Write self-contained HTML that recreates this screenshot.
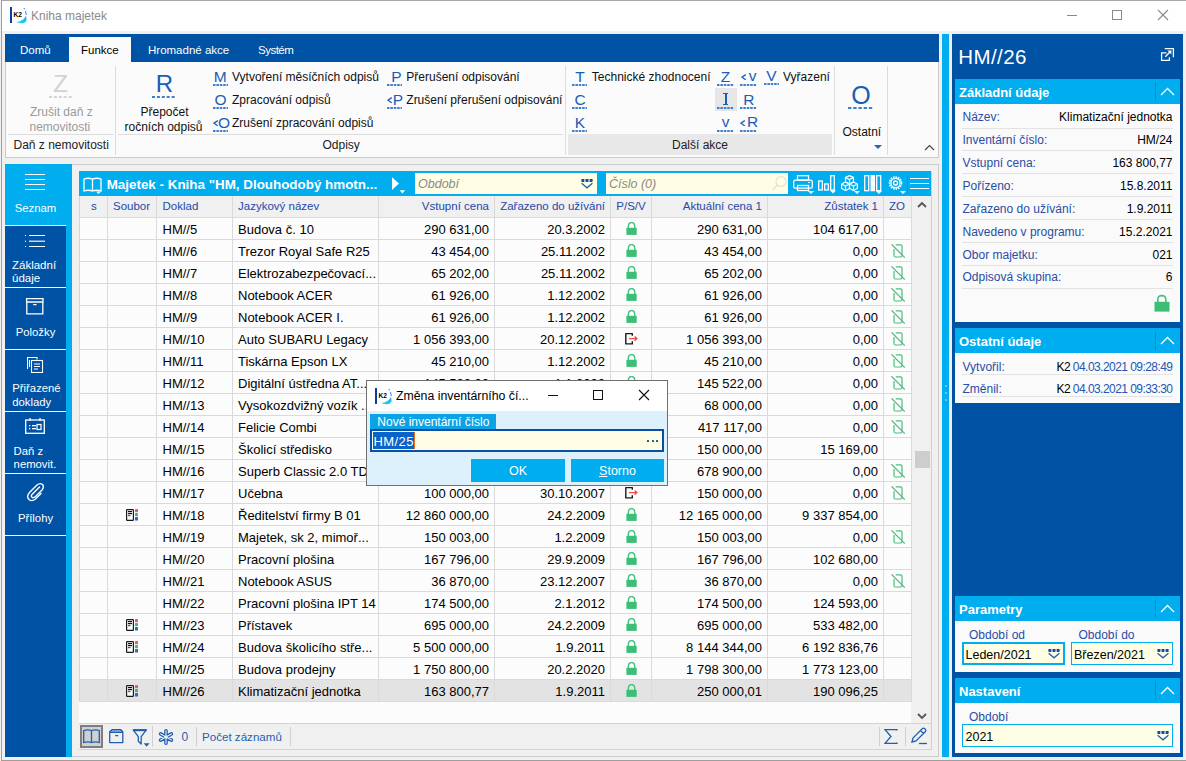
<!DOCTYPE html><html><head><meta charset="utf-8"><style>
html,body{margin:0;padding:0;width:1186px;height:761px;overflow:hidden;background:#F0F0F0;font-family:"Liberation Sans", sans-serif;}
body{position:relative;}
</style></head><body>
<div style="position:absolute;left:1px;top:0px;width:1185px;height:761px;box-sizing:border-box;border:1px solid #9E9E9E;border-top-color:#A8A8A8;border-right:none"></div>
<div style="position:absolute;left:2px;top:1px;width:1184px;height:30px;background:#FFFFFF"></div>
<svg style="position:absolute;left:10px;top:7px;" width="17" height="17" viewBox="0 0 17 17"><defs><linearGradient id="kg" x1="0" y1="1" x2="1" y2="0"><stop offset="0" stop-color="#2ED8C8"/><stop offset="0.6" stop-color="#12C8F5"/><stop offset="1" stop-color="#1E6CF0"/></linearGradient></defs><rect x="0" y="0" width="2" height="16" fill="#0A3E9A"/><text x="3.4" y="9.9" font-size="6.6" font-weight="700" fill="#000" font-family="Liberation Sans">K2</text><path d="M6 14.5 Q9 15.5 11 13.5 Q15 12 16 8.5 L16.5 13 Q16 16 12 16.2 Q8 16.5 6 14.5 Z" fill="url(#kg)"/><path d="M15.5 4 L16.3 8" stroke="#3A7BF0" stroke-width="1"/><circle cx="14.3" cy="1.8" r="0.8" fill="#4A8AF5"/></svg>
<div style="position:absolute;left:31px;top:9.84px;font-size:12px;line-height:1;color:#8A8A8A;font-weight:400;white-space:nowrap;">Kniha majetek</div>
<div style="position:absolute;left:1067px;top:15px;width:10px;height:1px;background:#8A8A8A"></div>
<div style="position:absolute;left:1112px;top:10px;width:10px;height:10px;box-sizing:border-box;border:1px solid #8A8A8A"></div>
<svg style="position:absolute;left:1157px;top:9px;" width="12" height="12" viewBox="0 0 12 12"><path d="M1 1 L11 11 M11 1 L1 11" stroke="#8A8A8A" stroke-width="1.1"/></svg>
<div style="position:absolute;left:5px;top:34px;width:934px;height:28px;background:#0052A5"></div>
<div style="position:absolute;left:69px;top:37px;width:62px;height:25px;background:#FBFBFB"></div>
<div style="position:absolute;left:20px;top:45.27px;font-size:11.5px;line-height:1;color:#FFFFFF;font-weight:400;white-space:nowrap;">Domů</div>
<div style="position:absolute;left:81px;top:45.27px;font-size:11.5px;line-height:1;color:#000000;font-weight:400;white-space:nowrap;">Funkce</div>
<div style="position:absolute;left:148px;top:45.27px;font-size:11.5px;line-height:1;color:#FFFFFF;font-weight:400;white-space:nowrap;">Hromadné akce</div>
<div style="position:absolute;left:258px;top:45.27px;font-size:11.5px;line-height:1;color:#FFFFFF;font-weight:400;white-space:nowrap;letter-spacing:-0.5px">Systém</div>
<div style="position:absolute;left:5px;top:62px;width:934px;height:96px;background:#FBFBFB;box-sizing:border-box;border:1px solid #CBCBCB;border-top:none"></div>
<div style="position:absolute;left:60.5px;transform:translateX(-50%);top:72.28px;font-size:24px;line-height:1;color:#D2D2D2;font-weight:400;white-space:nowrap;">Z</div>
<svg style="position:absolute;left:49px;top:95.5px;" width="24" height="2" viewBox="0 0 24 2"><line x1="0" y1="1.0" x2="24" y2="1.0" stroke="#D5D5D5" stroke-width="2" stroke-dasharray="3 1.9"/></svg>
<div style="position:absolute;left:30px;top:106.44px;font-size:12px;line-height:1;color:#9A9A9A;font-weight:400;white-space:nowrap;">Zrušit daň z</div>
<div style="position:absolute;left:29.5px;top:121.34px;font-size:12px;line-height:1;color:#9A9A9A;font-weight:400;white-space:nowrap;">nemovitosti</div>
<div style="position:absolute;left:8px;top:134px;width:105px;height:1px;background:#DCDCDC"></div>
<div style="position:absolute;left:13.5px;top:139.04px;font-size:12px;line-height:1;color:#222;font-weight:400;white-space:nowrap;">Daň z nemovitosti</div>
<div style="position:absolute;left:115px;top:66px;width:1px;height:89px;background:#DCDCDC"></div>
<div style="position:absolute;left:164.4px;transform:translateX(-50%);top:72.28px;font-size:24px;line-height:1;color:#1A5DB4;font-weight:400;white-space:nowrap;">R</div>
<svg style="position:absolute;left:152px;top:95.5px;" width="24" height="2" viewBox="0 0 24 2"><line x1="0" y1="1.0" x2="24" y2="1.0" stroke="#3F7FCC" stroke-width="2" stroke-dasharray="3 1.9"/></svg>
<div style="position:absolute;left:140.5px;top:106.44px;font-size:12px;line-height:1;color:#111;font-weight:400;white-space:nowrap;">Přepočet</div>
<div style="position:absolute;left:124.5px;top:121.34px;font-size:12px;line-height:1;color:#111;font-weight:400;white-space:nowrap;">ročních odpisů</div>
<div style="position:absolute;left:118px;top:134px;width:445px;height:1px;background:#DCDCDC"></div>
<div style="position:absolute;left:322.5px;top:138.64px;font-size:12px;line-height:1;color:#222;font-weight:400;white-space:nowrap;">Odpisy</div>
<div style="position:absolute;left:220.3px;transform:translateX(-50%);top:68.58px;font-size:15.5px;line-height:1;color:#1A5DB4;font-weight:400;white-space:nowrap;">M</div>
<svg style="position:absolute;left:213px;top:83.5px;" width="15" height="2" viewBox="0 0 15 2"><line x1="0" y1="1.0" x2="15" y2="1.0" stroke="#3F7FCC" stroke-width="2" stroke-dasharray="2.5 0.9"/></svg>
<div style="position:absolute;left:232px;top:71.34px;font-size:12px;line-height:1;color:#111;font-weight:400;white-space:nowrap;">Vytvoření měsíčních odpisů</div>
<div style="position:absolute;left:220.6px;transform:translateX(-50%);top:91.58px;font-size:15.5px;line-height:1;color:#1A5DB4;font-weight:400;white-space:nowrap;">O</div>
<svg style="position:absolute;left:213px;top:106.5px;" width="15" height="2" viewBox="0 0 15 2"><line x1="0" y1="1.0" x2="15" y2="1.0" stroke="#3F7FCC" stroke-width="2" stroke-dasharray="2.5 0.9"/></svg>
<div style="position:absolute;left:232px;top:94.34px;font-size:12px;line-height:1;color:#111;font-weight:400;white-space:nowrap;">Zpracování odpisů</div>
<div style="position:absolute;left:224px;transform:translateX(-50%);top:114.58px;font-size:15.5px;line-height:1;color:#1A5DB4;font-weight:400;white-space:nowrap;">O</div>
<svg style="position:absolute;left:212.8px;top:120.2px;" width="5.8" height="6.4" viewBox="0 0 5.8 6.4"><path d="M4.8 0.6 L0.9 3.2 L4.8 5.800000000000001" stroke="#1A5DB4" stroke-width="1.3" fill="none"/></svg>
<svg style="position:absolute;left:213px;top:129.5px;" width="15" height="2" viewBox="0 0 15 2"><line x1="0" y1="1.0" x2="15" y2="1.0" stroke="#3F7FCC" stroke-width="2" stroke-dasharray="2.5 0.9"/></svg>
<div style="position:absolute;left:232px;top:117.34px;font-size:12px;line-height:1;color:#111;font-weight:400;white-space:nowrap;">Zrušení zpracování odpisů</div>
<div style="position:absolute;left:396.3px;transform:translateX(-50%);top:68.58px;font-size:15.5px;line-height:1;color:#1A5DB4;font-weight:400;white-space:nowrap;">P</div>
<svg style="position:absolute;left:387px;top:83.5px;" width="15" height="2" viewBox="0 0 15 2"><line x1="0" y1="1.0" x2="15" y2="1.0" stroke="#3F7FCC" stroke-width="2" stroke-dasharray="2.5 0.9"/></svg>
<div style="position:absolute;left:406.3px;top:71.34px;font-size:12px;line-height:1;color:#111;font-weight:400;white-space:nowrap;">Přerušení odpisování</div>
<div style="position:absolute;left:398px;transform:translateX(-50%);top:91.58px;font-size:15.5px;line-height:1;color:#1A5DB4;font-weight:400;white-space:nowrap;">P</div>
<svg style="position:absolute;left:387.2px;top:97.2px;" width="5.8" height="6.4" viewBox="0 0 5.8 6.4"><path d="M4.8 0.6 L0.9 3.2 L4.8 5.800000000000001" stroke="#1A5DB4" stroke-width="1.3" fill="none"/></svg>
<svg style="position:absolute;left:387px;top:106.5px;" width="15" height="2" viewBox="0 0 15 2"><line x1="0" y1="1.0" x2="15" y2="1.0" stroke="#3F7FCC" stroke-width="2" stroke-dasharray="2.5 0.9"/></svg>
<div style="position:absolute;left:406.3px;top:94.34px;font-size:12px;line-height:1;color:#111;font-weight:400;white-space:nowrap;">Zrušení přerušení odpisování</div>
<div style="position:absolute;left:565px;top:66px;width:1px;height:89px;background:#DCDCDC"></div>
<div style="position:absolute;left:568px;top:134px;width:264px;height:21px;background:#E8E8E8"></div>
<div style="position:absolute;left:700px;transform:translateX(-50%);top:138.64px;font-size:12px;line-height:1;color:#222;font-weight:400;white-space:nowrap;">Další akce</div>
<div style="position:absolute;left:580px;transform:translateX(-50%);top:68.58px;font-size:15.5px;line-height:1;color:#1A5DB4;font-weight:400;white-space:nowrap;">T</div>
<svg style="position:absolute;left:572px;top:83.5px;" width="15" height="2" viewBox="0 0 15 2"><line x1="0" y1="1.0" x2="15" y2="1.0" stroke="#3F7FCC" stroke-width="2" stroke-dasharray="2.5 0.9"/></svg>
<div style="position:absolute;left:591.8px;top:71.34px;font-size:12px;line-height:1;color:#111;font-weight:400;white-space:nowrap;">Technické zhodnocení</div>
<div style="position:absolute;left:580px;transform:translateX(-50%);top:91.58px;font-size:15.5px;line-height:1;color:#1A5DB4;font-weight:400;white-space:nowrap;">C</div>
<svg style="position:absolute;left:572px;top:106.5px;" width="15" height="2" viewBox="0 0 15 2"><line x1="0" y1="1.0" x2="15" y2="1.0" stroke="#3F7FCC" stroke-width="2" stroke-dasharray="2.5 0.9"/></svg>
<div style="position:absolute;left:580px;transform:translateX(-50%);top:114.58px;font-size:15.5px;line-height:1;color:#1A5DB4;font-weight:400;white-space:nowrap;">K</div>
<svg style="position:absolute;left:572px;top:129.5px;" width="15" height="2" viewBox="0 0 15 2"><line x1="0" y1="1.0" x2="15" y2="1.0" stroke="#3F7FCC" stroke-width="2" stroke-dasharray="2.5 0.9"/></svg>
<div style="position:absolute;left:715px;top:88px;width:22px;height:23px;background:#E6E6E6"></div>
<div style="position:absolute;left:725.5px;transform:translateX(-50%);top:68.78px;font-size:15.5px;line-height:1;color:#1A5DB4;font-weight:400;white-space:nowrap;">Z</div>
<svg style="position:absolute;left:717px;top:84px;" width="17" height="2" viewBox="0 0 17 2"><line x1="0" y1="1.0" x2="17" y2="1.0" stroke="#3F7FCC" stroke-width="2" stroke-dasharray="2.5 0.9"/></svg>
<div style="position:absolute;left:725px;top:93.2px;width:1.6px;height:11.6px;background:#1A5DB4"></div>
<div style="position:absolute;left:723px;top:93.2px;width:5.4px;height:1.3px;background:#1A5DB4"></div>
<div style="position:absolute;left:723px;top:103.5px;width:5.4px;height:1.3px;background:#1A5DB4"></div>
<svg style="position:absolute;left:717px;top:107px;" width="17" height="2" viewBox="0 0 17 2"><line x1="0" y1="1.0" x2="17" y2="1.0" stroke="#3F7FCC" stroke-width="2" stroke-dasharray="2.5 0.9"/></svg>
<div style="position:absolute;left:725.5px;transform:translateX(-50%);top:113.88px;font-size:15.5px;line-height:1;color:#1A5DB4;font-weight:400;white-space:nowrap;">v</div>
<svg style="position:absolute;left:717px;top:130px;" width="17" height="2" viewBox="0 0 17 2"><line x1="0" y1="1.0" x2="17" y2="1.0" stroke="#3F7FCC" stroke-width="2" stroke-dasharray="2.5 0.9"/></svg>
<div style="position:absolute;left:752.6px;transform:translateX(-50%);top:68.18px;font-size:15.5px;line-height:1;color:#1A5DB4;font-weight:400;white-space:nowrap;">v</div>
<svg style="position:absolute;left:741px;top:73.8px;" width="5.8" height="6.4" viewBox="0 0 5.8 6.4"><path d="M4.8 0.6 L0.9 3.2 L4.8 5.800000000000001" stroke="#1A5DB4" stroke-width="1.3" fill="none"/></svg>
<svg style="position:absolute;left:740px;top:84px;" width="17" height="2" viewBox="0 0 17 2"><line x1="0" y1="1.0" x2="17" y2="1.0" stroke="#3F7FCC" stroke-width="2" stroke-dasharray="2.5 0.9"/></svg>
<div style="position:absolute;left:748.8px;transform:translateX(-50%);top:91.68px;font-size:15.5px;line-height:1;color:#1A5DB4;font-weight:400;white-space:nowrap;">R</div>
<svg style="position:absolute;left:740px;top:107px;" width="17" height="2" viewBox="0 0 17 2"><line x1="0" y1="1.0" x2="17" y2="1.0" stroke="#3F7FCC" stroke-width="2" stroke-dasharray="2.5 0.9"/></svg>
<div style="position:absolute;left:752.6px;transform:translateX(-50%);top:114.28px;font-size:15.5px;line-height:1;color:#1A5DB4;font-weight:400;white-space:nowrap;">R</div>
<svg style="position:absolute;left:740.2px;top:119.9px;" width="5.8" height="6.4" viewBox="0 0 5.8 6.4"><path d="M4.8 0.6 L0.9 3.2 L4.8 5.800000000000001" stroke="#1A5DB4" stroke-width="1.3" fill="none"/></svg>
<svg style="position:absolute;left:740px;top:130px;" width="17" height="2" viewBox="0 0 17 2"><line x1="0" y1="1.0" x2="17" y2="1.0" stroke="#3F7FCC" stroke-width="2" stroke-dasharray="2.5 0.9"/></svg>
<div style="position:absolute;left:771.5px;transform:translateX(-50%);top:68.18px;font-size:15.5px;line-height:1;color:#1A5DB4;font-weight:400;white-space:nowrap;">V</div>
<svg style="position:absolute;left:764px;top:83.2px;" width="15" height="2" viewBox="0 0 15 2"><line x1="0" y1="1.0" x2="15" y2="1.0" stroke="#3F7FCC" stroke-width="2" stroke-dasharray="2.5 0.9"/></svg>
<div style="position:absolute;left:783px;top:71.34px;font-size:12px;line-height:1;color:#111;font-weight:400;white-space:nowrap;">Vyřazení</div>
<div style="position:absolute;left:834px;top:66px;width:1px;height:89px;background:#DCDCDC"></div>
<div style="position:absolute;left:861px;transform:translateX(-50%);top:83.14px;font-size:25px;line-height:1;color:#1A5DB4;font-weight:400;white-space:nowrap;">O</div>
<svg style="position:absolute;left:848px;top:107.3px;" width="26" height="2" viewBox="0 0 26 2"><line x1="0" y1="1.0" x2="26" y2="1.0" stroke="#3F7FCC" stroke-width="2" stroke-dasharray="3.4 1.8"/></svg>
<div style="position:absolute;left:842.5px;top:126.14px;font-size:12px;line-height:1;color:#111;font-weight:400;white-space:nowrap;">Ostatní</div>
<svg style="position:absolute;left:874px;top:145px;" width="8" height="4" viewBox="0 0 8 4"><path d="M0 0 L8 0 L4 4 Z" fill="#1F66B8"/></svg>
<div style="position:absolute;left:887px;top:66px;width:1px;height:89px;background:#DCDCDC"></div>
<svg style="position:absolute;left:923.5px;top:144px;" width="11" height="7" viewBox="0 0 11 7"><path d="M1 6 L5.5 1.5 L10 6" stroke="#444" stroke-width="1.2" fill="none"/></svg>
<div style="position:absolute;left:72px;top:164px;width:867px;height:593px;box-sizing:border-box;border:1px solid #CBCBCB;border-left:none"></div>
<div style="position:absolute;left:5px;top:164px;width:67px;height:593px;background:#00ADEF"></div>
<div style="position:absolute;left:5px;top:226px;width:61px;height:531px;background:#0052A5"></div>
<div style="position:absolute;left:5px;top:225px;width:61px;height:1px;background:#FFFFFF"></div>
<div style="position:absolute;left:5px;top:287px;width:61px;height:1px;background:#FFFFFF"></div>
<div style="position:absolute;left:5px;top:349px;width:61px;height:1px;background:#FFFFFF"></div>
<div style="position:absolute;left:5px;top:411px;width:61px;height:1px;background:#FFFFFF"></div>
<div style="position:absolute;left:5px;top:473px;width:61px;height:1px;background:#FFFFFF"></div>
<div style="position:absolute;left:5px;top:535px;width:61px;height:1px;background:#FFFFFF"></div>
<div style="position:absolute;left:25px;top:174px;width:20px;height:1px;background:#FFFFFF"></div>
<div style="position:absolute;left:25px;top:179px;width:20px;height:1px;background:#FFFFFF"></div>
<div style="position:absolute;left:25px;top:184px;width:20px;height:1px;background:#FFFFFF"></div>
<div style="position:absolute;left:25px;top:189px;width:20px;height:1px;background:#FFFFFF"></div>
<div style="position:absolute;left:35.5px;transform:translateX(-50%);top:203.43px;font-size:11.3px;line-height:1;color:#FFFFFF;font-weight:400;white-space:nowrap;">Seznam</div>
<svg style="position:absolute;left:25px;top:234px;" width="20" height="14" viewBox="0 0 20 14"><g fill="#FFFFFF"><rect x="0" y="1" width="1" height="1"/><rect x="0" y="6.6" width="1" height="1.2"/><rect x="0" y="12" width="1" height="1"/><rect x="4" y="1" width="16" height="1"/><rect x="4" y="6.5" width="16" height="1.5" fill="#C8D6EA"/><rect x="4" y="12" width="16" height="1"/></g></svg>
<div style="position:absolute;left:12px;top:260.27px;font-size:11.5px;line-height:1;color:#FFFFFF;font-weight:400;white-space:nowrap;">Základní</div>
<div style="position:absolute;left:12px;top:273.27px;font-size:11.5px;line-height:1;color:#FFFFFF;font-weight:400;white-space:nowrap;">údaje</div>
<svg style="position:absolute;left:25px;top:298px;" width="20" height="17" viewBox="0 0 20 17"><g fill="none" stroke="#FFFFFF" stroke-width="1.3"><path d="M1.6 0.7 H18 V4 H1.6 Z M1.8 4 V15.8 H17.8 V4"/><path d="M8.2 6.6 H11.6"/></g></svg>
<div style="position:absolute;left:35.5px;transform:translateX(-50%);top:327.43px;font-size:11.3px;line-height:1;color:#FFFFFF;font-weight:400;white-space:nowrap;">Položky</div>
<svg style="position:absolute;left:27px;top:357px;" width="17" height="16" viewBox="0 0 17 16"><g fill="none" stroke="#FFFFFF" stroke-width="1.1"><path d="M0.5 12 V0.5 H10 V2.5"/><rect x="4.5" y="3.5" width="11" height="12"/><path d="M7 7 H13 M7 9.5 H13 M7 12 H11"/><path d="M2.5 3 V10"/></g></svg>
<div style="position:absolute;left:12.3px;top:383.43px;font-size:11.3px;line-height:1;color:#FFFFFF;font-weight:400;white-space:nowrap;">Přiřazené</div>
<div style="position:absolute;left:12.3px;top:396.73px;font-size:11.3px;line-height:1;color:#FFFFFF;font-weight:400;white-space:nowrap;">doklady</div>
<svg style="position:absolute;left:25px;top:418px;" width="20" height="16" viewBox="0 0 20 16"><g fill="none" stroke="#FFFFFF" stroke-width="1.3"><rect x="0.7" y="2" width="18.6" height="13.3"/><path d="M5 0 V3 M15 0 V3"/></g><g fill="#FFFFFF"><rect x="4" y="7" width="1.3" height="1.3"/><rect x="4" y="10" width="1.3" height="1.3"/><rect x="7" y="7" width="4" height="1.3"/><rect x="7" y="10" width="4" height="1.3"/><rect x="12" y="6.5" width="4" height="5" fill="none" stroke="#FFFFFF" stroke-width="1.2"/></g></svg>
<div style="position:absolute;left:13.6px;top:446.43px;font-size:11.3px;line-height:1;color:#FFFFFF;font-weight:400;white-space:nowrap;">Daň z</div>
<div style="position:absolute;left:13.6px;top:459.03px;font-size:11.3px;line-height:1;color:#FFFFFF;font-weight:400;white-space:nowrap;">nemovit.</div>
<svg style="position:absolute;left:26px;top:482px;" width="19" height="20" viewBox="0 0 19 20"><path d="M13.5 5 L6 12.5 Q4.5 14.5 6.5 15.5 Q8 16 9.5 14.5 L16 8 Q18.5 5 16.5 2.5 Q14 0.5 11 3 L3.5 10.5 Q0 14.5 3 17.5 Q6 20 9.5 17 L15 11.5" fill="none" stroke="#FFFFFF" stroke-width="1.4" stroke-linecap="round"/></svg>
<div style="position:absolute;left:35.5px;transform:translateX(-50%);top:513.43px;font-size:11.3px;line-height:1;color:#FFFFFF;font-weight:400;white-space:nowrap;">Přílohy</div>
<div style="position:absolute;left:942px;top:34px;width:7px;height:723px;background:#00ADEF"></div>
<div style="position:absolute;left:944.5px;top:385px;width:2px;height:2px;background:#7FD3F5;border-radius:1px"></div>
<div style="position:absolute;left:944.5px;top:392px;width:2px;height:2px;background:#7FD3F5;border-radius:1px"></div>
<div style="position:absolute;left:944.5px;top:399px;width:2px;height:2px;background:#7FD3F5;border-radius:1px"></div>
<div style="position:absolute;left:952px;top:34px;width:231px;height:723px;background:#0052A5"></div>
<div style="position:absolute;left:79px;top:171px;width:853px;height:25px;background:#00ADEF"></div>
<svg style="position:absolute;left:83px;top:177px;" width="20" height="17" viewBox="0 0 20 17"><g fill="none" stroke="#FFFFFF" stroke-width="1.3"><path d="M1 2 Q5 0.5 9.5 2 V14 Q5 12.5 1 14 Z"/><path d="M9.5 2 Q14 0.5 18 2 V14 Q14 12.5 9.5 14"/></g><path d="M13 14.5 L18 14.5 L15.5 17 Z" fill="#FFFFFF"/></svg>
<div style="position:absolute;left:106.7px;top:178.16px;font-size:13.4px;line-height:1;color:#FFFFFF;font-weight:700;white-space:nowrap;">Majetek - Kniha &quot;HM, Dlouhodobý hmotn...</div>
<svg style="position:absolute;left:391px;top:176px;" width="15" height="18" viewBox="0 0 15 18"><path d="M1 1.2 L8 7.6 L1 14 Z" fill="#FFFFFF"/><path d="M8.7 14.2 L14.2 14.2 L11.45 17.5 Z" fill="#FFFFFF"/></svg>
<div style="position:absolute;left:415px;top:173px;width:182px;height:21px;background:#FFFDE3"></div>
<div style="position:absolute;left:418px;top:178.42px;font-size:12.5px;line-height:1;color:#8A8A8A;font-weight:400;white-space:nowrap;font-style:italic">Období</div>
<svg style="position:absolute;left:580.5px;top:179px;" width="12" height="10" viewBox="0 0 12 10"><g fill="#0C4FA6"><rect x="0.4" y="0" width="3" height="3" rx="0.4"/><rect x="4.5" y="0" width="3" height="3" rx="0.4"/><rect x="8.6" y="0" width="3" height="3" rx="0.4"/></g><path d="M0.6 4.3 L6 8.8 L11.4 4.3" stroke="#245EB0" stroke-width="1.3" fill="none"/></svg>
<div style="position:absolute;left:606px;top:173px;width:182px;height:21px;background:#FFFDE3"></div>
<div style="position:absolute;left:609px;top:178.42px;font-size:12.5px;line-height:1;color:#8A8A8A;font-weight:400;white-space:nowrap;font-style:italic">Číslo (0)</div>
<svg style="position:absolute;left:771px;top:175px;" width="16" height="17" viewBox="0 0 16 17"><circle cx="10" cy="6.5" r="5" fill="none" stroke="#E2E2D4" stroke-width="1.2"/><path d="M6.5 10 L1.5 15" stroke="#E2E2D4" stroke-width="1.4"/></svg>
<svg style="position:absolute;left:793px;top:175px;" width="22" height="19" viewBox="0 0 22 19"><g fill="none" stroke="#FFF" stroke-width="1.3"><rect x="4.5" y="0.7" width="11" height="4.5"/><rect x="0.7" y="5.2" width="18.6" height="8" rx="1.5"/><rect x="4.5" y="10.5" width="11" height="5"/></g><rect x="15" y="7" width="2" height="1" fill="#FFF"/><path d="M15 16 L21 16 L18 19 Z" fill="#FFF"/></svg>
<svg style="position:absolute;left:818px;top:175px;" width="20" height="19" viewBox="0 0 20 19"><g fill="none" stroke="#FFF" stroke-width="1.3"><rect x="0.7" y="6" width="3.6" height="9"/><rect x="6.7" y="9" width="3.6" height="6"/><rect x="12.7" y="0.7" width="3.6" height="14.3"/></g><path d="M12 15.5 L18 15.5 L15 18.5 Z" fill="#FFF"/></svg>
<svg style="position:absolute;left:841px;top:175px;" width="20" height="19" viewBox="0 0 20 19"><g fill="none" stroke="#FFF" stroke-width="1.2"><path d="M8.5 0.6 L12.5 2.5 L12.5 7 L8.5 9 L4.5 7 L4.5 2.5 Z M4.5 2.5 L8.5 4.5 L12.5 2.5 M8.5 4.5 V9"/><path d="M4.5 7 L8.5 9 L8.5 13.5 L4.5 15.5 L0.6 13.5 L0.6 9 Z M0.6 9 L4.5 11 L8.5 9 M4.5 11 V15.5"/><path d="M12.5 7 L16.4 9 L16.4 13.5 L12.5 15.5 L8.5 13.5 L8.5 9 Z M8.5 9 L12.5 11 L16.4 9 M12.5 11 V15.5"/></g><path d="M13 16 L19 16 L16 19 Z" fill="#FFF"/></svg>
<svg style="position:absolute;left:864px;top:175px;" width="20" height="19" viewBox="0 0 20 19"><g fill="none" stroke="#FFF" stroke-width="1.3"><rect x="0.7" y="0.7" width="4" height="15"/><rect x="12.7" y="0.7" width="4" height="15"/></g><rect x="6.5" y="0" width="4.5" height="16.3" fill="#FFF"/><path d="M12 16 L18 16 L15 19 Z" fill="#FFF"/></svg>
<svg style="position:absolute;left:887px;top:175px;" width="20" height="19" viewBox="0 0 20 19"><g fill="none" stroke="#FFF"><circle cx="8.5" cy="8" r="6" stroke-width="1.6" stroke-dasharray="1.6 0.9"/><circle cx="8.5" cy="8" r="4.6" stroke-width="1.3"/><circle cx="8.5" cy="8" r="2" stroke-width="1.3"/></g><path d="M13 16 L19 16 L16 19 Z" fill="#FFF"/></svg>
<div style="position:absolute;left:907px;top:175px;width:1px;height:19px;background:#1E8FC8"></div>
<div style="position:absolute;left:910px;top:178px;width:19px;height:1.3px;background:#FFF"></div>
<div style="position:absolute;left:910px;top:183px;width:19px;height:1.3px;background:#FFF"></div>
<div style="position:absolute;left:910px;top:188px;width:19px;height:1.3px;background:#FFF"></div>
<div style="position:absolute;left:79px;top:196px;width:832px;height:22px;background:#F0F0F0"></div>
<div style="position:absolute;left:79px;top:218px;width:832px;height:506px;background:#FCFCFC"></div>
<div style="position:absolute;left:79px;top:196px;width:1px;height:528px;background:#D4D4D4"></div>
<div style="position:absolute;left:91px;top:201.27px;font-size:11.5px;line-height:1;color:#2548A8;font-weight:400;white-space:nowrap;">s</div>
<div style="position:absolute;left:113px;top:201.27px;font-size:11.5px;line-height:1;color:#2548A8;font-weight:400;white-space:nowrap;">Soubor</div>
<div style="position:absolute;left:162.5px;top:201.27px;font-size:11.5px;line-height:1;color:#2548A8;font-weight:400;white-space:nowrap;">Doklad</div>
<div style="position:absolute;left:238px;top:201.27px;font-size:11.5px;line-height:1;color:#2548A8;font-weight:400;white-space:nowrap;">Jazykový název</div>
<div style="position:absolute;right:697px;top:201.27px;font-size:11.5px;line-height:1;color:#2548A8;font-weight:400;white-space:nowrap;">Vstupní cena</div>
<div style="position:absolute;right:581px;top:201.27px;font-size:11.5px;line-height:1;color:#2548A8;font-weight:400;white-space:nowrap;">Zařazeno do užívání</div>
<div style="position:absolute;left:631px;transform:translateX(-50%);top:201.27px;font-size:11.5px;line-height:1;color:#2548A8;font-weight:400;white-space:nowrap;">P/S/V</div>
<div style="position:absolute;right:424px;top:201.27px;font-size:11.5px;line-height:1;color:#2548A8;font-weight:400;white-space:nowrap;">Aktuální cena 1</div>
<div style="position:absolute;right:308px;top:201.27px;font-size:11.5px;line-height:1;color:#2548A8;font-weight:400;white-space:nowrap;">Zůstatek 1</div>
<div style="position:absolute;left:889px;top:201.27px;font-size:11.5px;line-height:1;color:#2548A8;font-weight:400;white-space:nowrap;">ZO</div>
<div style="position:absolute;left:162.5px;top:222.60px;font-size:13px;line-height:1;color:#000;font-weight:400;white-space:nowrap;">HM//5</div>
<div style="position:absolute;left:238px;top:222.60px;font-size:13px;line-height:1;color:#000;font-weight:400;white-space:nowrap;">Budova č. 10</div>
<div style="position:absolute;right:697px;top:222.60px;font-size:13px;line-height:1;color:#000;font-weight:400;white-space:nowrap;">290 631,00</div>
<div style="position:absolute;right:581px;top:222.60px;font-size:13px;line-height:1;color:#000;font-weight:400;white-space:nowrap;">20.3.2002</div>
<svg style="position:absolute;left:625.5px;top:222px;" width="12" height="14" viewBox="0 0 12 14"><path d="M2.3 6.2 V4.8 Q2.3 0.6 5.55 0.6 Q8.8 0.6 8.8 4.8 V6.2" fill="none" stroke="#44C282" stroke-width="1.4"/><rect x="0.4" y="5.8" width="10.3" height="7.1" fill="#3DBE77"/></svg>
<div style="position:absolute;right:424px;top:222.60px;font-size:13px;line-height:1;color:#000;font-weight:400;white-space:nowrap;">290 631,00</div>
<div style="position:absolute;right:308px;top:222.60px;font-size:13px;line-height:1;color:#000;font-weight:400;white-space:nowrap;">104 617,00</div>
<div style="position:absolute;left:79px;top:239px;width:832px;height:1px;background:#DADADA"></div>
<div style="position:absolute;left:162.5px;top:244.60px;font-size:13px;line-height:1;color:#000;font-weight:400;white-space:nowrap;">HM//6</div>
<div style="position:absolute;left:238px;top:244.60px;font-size:13px;line-height:1;color:#000;font-weight:400;white-space:nowrap;">Trezor Royal Safe R25</div>
<div style="position:absolute;right:697px;top:244.60px;font-size:13px;line-height:1;color:#000;font-weight:400;white-space:nowrap;">43 454,00</div>
<div style="position:absolute;right:581px;top:244.60px;font-size:13px;line-height:1;color:#000;font-weight:400;white-space:nowrap;">25.11.2002</div>
<svg style="position:absolute;left:625.5px;top:244px;" width="12" height="14" viewBox="0 0 12 14"><path d="M2.3 6.2 V4.8 Q2.3 0.6 5.55 0.6 Q8.8 0.6 8.8 4.8 V6.2" fill="none" stroke="#44C282" stroke-width="1.4"/><rect x="0.4" y="5.8" width="10.3" height="7.1" fill="#3DBE77"/></svg>
<div style="position:absolute;right:424px;top:244.60px;font-size:13px;line-height:1;color:#000;font-weight:400;white-space:nowrap;">43 454,00</div>
<div style="position:absolute;right:308px;top:244.60px;font-size:13px;line-height:1;color:#000;font-weight:400;white-space:nowrap;">0,00</div>
<svg style="position:absolute;left:890.5px;top:244px;" width="14" height="14" viewBox="0 0 14 14"><path d="M4.8 0.8 H9.5 Q11 0.8 11 2.3 V11.5 Q11 13 9.5 13 H4.5 Q3 13 3 11.5 V5" fill="none" stroke="#48BE7E" stroke-width="1.2"/><path d="M0.5 0.3 L13.8 13.6" stroke="#48BE7E" stroke-width="1.2"/></svg>
<div style="position:absolute;left:79px;top:261px;width:832px;height:1px;background:#DADADA"></div>
<div style="position:absolute;left:162.5px;top:266.60px;font-size:13px;line-height:1;color:#000;font-weight:400;white-space:nowrap;">HM//7</div>
<div style="position:absolute;left:238px;top:266.60px;font-size:13px;line-height:1;color:#000;font-weight:400;white-space:nowrap;">Elektrozabezpečovací...</div>
<div style="position:absolute;right:697px;top:266.60px;font-size:13px;line-height:1;color:#000;font-weight:400;white-space:nowrap;">65 202,00</div>
<div style="position:absolute;right:581px;top:266.60px;font-size:13px;line-height:1;color:#000;font-weight:400;white-space:nowrap;">25.11.2002</div>
<svg style="position:absolute;left:625.5px;top:266px;" width="12" height="14" viewBox="0 0 12 14"><path d="M2.3 6.2 V4.8 Q2.3 0.6 5.55 0.6 Q8.8 0.6 8.8 4.8 V6.2" fill="none" stroke="#44C282" stroke-width="1.4"/><rect x="0.4" y="5.8" width="10.3" height="7.1" fill="#3DBE77"/></svg>
<div style="position:absolute;right:424px;top:266.60px;font-size:13px;line-height:1;color:#000;font-weight:400;white-space:nowrap;">65 202,00</div>
<div style="position:absolute;right:308px;top:266.60px;font-size:13px;line-height:1;color:#000;font-weight:400;white-space:nowrap;">0,00</div>
<svg style="position:absolute;left:890.5px;top:266px;" width="14" height="14" viewBox="0 0 14 14"><path d="M4.8 0.8 H9.5 Q11 0.8 11 2.3 V11.5 Q11 13 9.5 13 H4.5 Q3 13 3 11.5 V5" fill="none" stroke="#48BE7E" stroke-width="1.2"/><path d="M0.5 0.3 L13.8 13.6" stroke="#48BE7E" stroke-width="1.2"/></svg>
<div style="position:absolute;left:79px;top:283px;width:832px;height:1px;background:#DADADA"></div>
<div style="position:absolute;left:162.5px;top:288.60px;font-size:13px;line-height:1;color:#000;font-weight:400;white-space:nowrap;">HM//8</div>
<div style="position:absolute;left:238px;top:288.60px;font-size:13px;line-height:1;color:#000;font-weight:400;white-space:nowrap;">Notebook ACER</div>
<div style="position:absolute;right:697px;top:288.60px;font-size:13px;line-height:1;color:#000;font-weight:400;white-space:nowrap;">61 926,00</div>
<div style="position:absolute;right:581px;top:288.60px;font-size:13px;line-height:1;color:#000;font-weight:400;white-space:nowrap;">1.12.2002</div>
<svg style="position:absolute;left:625.5px;top:288px;" width="12" height="14" viewBox="0 0 12 14"><path d="M2.3 6.2 V4.8 Q2.3 0.6 5.55 0.6 Q8.8 0.6 8.8 4.8 V6.2" fill="none" stroke="#44C282" stroke-width="1.4"/><rect x="0.4" y="5.8" width="10.3" height="7.1" fill="#3DBE77"/></svg>
<div style="position:absolute;right:424px;top:288.60px;font-size:13px;line-height:1;color:#000;font-weight:400;white-space:nowrap;">61 926,00</div>
<div style="position:absolute;right:308px;top:288.60px;font-size:13px;line-height:1;color:#000;font-weight:400;white-space:nowrap;">0,00</div>
<svg style="position:absolute;left:890.5px;top:288px;" width="14" height="14" viewBox="0 0 14 14"><path d="M4.8 0.8 H9.5 Q11 0.8 11 2.3 V11.5 Q11 13 9.5 13 H4.5 Q3 13 3 11.5 V5" fill="none" stroke="#48BE7E" stroke-width="1.2"/><path d="M0.5 0.3 L13.8 13.6" stroke="#48BE7E" stroke-width="1.2"/></svg>
<div style="position:absolute;left:79px;top:305px;width:832px;height:1px;background:#DADADA"></div>
<div style="position:absolute;left:162.5px;top:310.60px;font-size:13px;line-height:1;color:#000;font-weight:400;white-space:nowrap;">HM//9</div>
<div style="position:absolute;left:238px;top:310.60px;font-size:13px;line-height:1;color:#000;font-weight:400;white-space:nowrap;">Notebook ACER I.</div>
<div style="position:absolute;right:697px;top:310.60px;font-size:13px;line-height:1;color:#000;font-weight:400;white-space:nowrap;">61 926,00</div>
<div style="position:absolute;right:581px;top:310.60px;font-size:13px;line-height:1;color:#000;font-weight:400;white-space:nowrap;">1.12.2002</div>
<svg style="position:absolute;left:625.5px;top:310px;" width="12" height="14" viewBox="0 0 12 14"><path d="M2.3 6.2 V4.8 Q2.3 0.6 5.55 0.6 Q8.8 0.6 8.8 4.8 V6.2" fill="none" stroke="#44C282" stroke-width="1.4"/><rect x="0.4" y="5.8" width="10.3" height="7.1" fill="#3DBE77"/></svg>
<div style="position:absolute;right:424px;top:310.60px;font-size:13px;line-height:1;color:#000;font-weight:400;white-space:nowrap;">61 926,00</div>
<div style="position:absolute;right:308px;top:310.60px;font-size:13px;line-height:1;color:#000;font-weight:400;white-space:nowrap;">0,00</div>
<svg style="position:absolute;left:890.5px;top:310px;" width="14" height="14" viewBox="0 0 14 14"><path d="M4.8 0.8 H9.5 Q11 0.8 11 2.3 V11.5 Q11 13 9.5 13 H4.5 Q3 13 3 11.5 V5" fill="none" stroke="#48BE7E" stroke-width="1.2"/><path d="M0.5 0.3 L13.8 13.6" stroke="#48BE7E" stroke-width="1.2"/></svg>
<div style="position:absolute;left:79px;top:327px;width:832px;height:1px;background:#DADADA"></div>
<div style="position:absolute;left:162.5px;top:332.60px;font-size:13px;line-height:1;color:#000;font-weight:400;white-space:nowrap;">HM//10</div>
<div style="position:absolute;left:238px;top:332.60px;font-size:13px;line-height:1;color:#000;font-weight:400;white-space:nowrap;">Auto SUBARU Legacy</div>
<div style="position:absolute;right:697px;top:332.60px;font-size:13px;line-height:1;color:#000;font-weight:400;white-space:nowrap;">1 056 393,00</div>
<div style="position:absolute;right:581px;top:332.60px;font-size:13px;line-height:1;color:#000;font-weight:400;white-space:nowrap;">20.12.2002</div>
<svg style="position:absolute;left:624px;top:332px;" width="15" height="14" viewBox="0 0 15 14"><path d="M8.3 3.8 V1.6 H1.8 V11.9 H8.3 V9.3" fill="none" stroke="#1A1A1A" stroke-width="1.4" stroke-linejoin="round"/><path d="M5 6.6 H12.6" stroke="#F04A50" stroke-width="1.3"/><path d="M10.6 4.5 L12.9 6.6 L10.6 8.7" fill="none" stroke="#F04A50" stroke-width="1.3"/></svg>
<div style="position:absolute;right:424px;top:332.60px;font-size:13px;line-height:1;color:#000;font-weight:400;white-space:nowrap;">1 056 393,00</div>
<div style="position:absolute;right:308px;top:332.60px;font-size:13px;line-height:1;color:#000;font-weight:400;white-space:nowrap;">0,00</div>
<svg style="position:absolute;left:890.5px;top:332px;" width="14" height="14" viewBox="0 0 14 14"><path d="M4.8 0.8 H9.5 Q11 0.8 11 2.3 V11.5 Q11 13 9.5 13 H4.5 Q3 13 3 11.5 V5" fill="none" stroke="#48BE7E" stroke-width="1.2"/><path d="M0.5 0.3 L13.8 13.6" stroke="#48BE7E" stroke-width="1.2"/></svg>
<div style="position:absolute;left:79px;top:349px;width:832px;height:1px;background:#DADADA"></div>
<div style="position:absolute;left:162.5px;top:354.60px;font-size:13px;line-height:1;color:#000;font-weight:400;white-space:nowrap;">HM//11</div>
<div style="position:absolute;left:238px;top:354.60px;font-size:13px;line-height:1;color:#000;font-weight:400;white-space:nowrap;">Tiskárna Epson LX</div>
<div style="position:absolute;right:697px;top:354.60px;font-size:13px;line-height:1;color:#000;font-weight:400;white-space:nowrap;">45 210,00</div>
<div style="position:absolute;right:581px;top:354.60px;font-size:13px;line-height:1;color:#000;font-weight:400;white-space:nowrap;">1.12.2002</div>
<svg style="position:absolute;left:625.5px;top:354px;" width="12" height="14" viewBox="0 0 12 14"><path d="M2.3 6.2 V4.8 Q2.3 0.6 5.55 0.6 Q8.8 0.6 8.8 4.8 V6.2" fill="none" stroke="#44C282" stroke-width="1.4"/><rect x="0.4" y="5.8" width="10.3" height="7.1" fill="#3DBE77"/></svg>
<div style="position:absolute;right:424px;top:354.60px;font-size:13px;line-height:1;color:#000;font-weight:400;white-space:nowrap;">45 210,00</div>
<div style="position:absolute;right:308px;top:354.60px;font-size:13px;line-height:1;color:#000;font-weight:400;white-space:nowrap;">0,00</div>
<svg style="position:absolute;left:890.5px;top:354px;" width="14" height="14" viewBox="0 0 14 14"><path d="M4.8 0.8 H9.5 Q11 0.8 11 2.3 V11.5 Q11 13 9.5 13 H4.5 Q3 13 3 11.5 V5" fill="none" stroke="#48BE7E" stroke-width="1.2"/><path d="M0.5 0.3 L13.8 13.6" stroke="#48BE7E" stroke-width="1.2"/></svg>
<div style="position:absolute;left:79px;top:371px;width:832px;height:1px;background:#DADADA"></div>
<div style="position:absolute;left:162.5px;top:376.60px;font-size:13px;line-height:1;color:#000;font-weight:400;white-space:nowrap;">HM//12</div>
<div style="position:absolute;left:238px;top:376.60px;font-size:13px;line-height:1;color:#000;font-weight:400;white-space:nowrap;">Digitální ústředna AT...</div>
<div style="position:absolute;right:697px;top:376.60px;font-size:13px;line-height:1;color:#000;font-weight:400;white-space:nowrap;">145 522,00</div>
<div style="position:absolute;right:581px;top:376.60px;font-size:13px;line-height:1;color:#000;font-weight:400;white-space:nowrap;">1.1.2002</div>
<svg style="position:absolute;left:625.5px;top:376px;" width="12" height="14" viewBox="0 0 12 14"><path d="M2.3 6.2 V4.8 Q2.3 0.6 5.55 0.6 Q8.8 0.6 8.8 4.8 V6.2" fill="none" stroke="#44C282" stroke-width="1.4"/><rect x="0.4" y="5.8" width="10.3" height="7.1" fill="#3DBE77"/></svg>
<div style="position:absolute;right:424px;top:376.60px;font-size:13px;line-height:1;color:#000;font-weight:400;white-space:nowrap;">145 522,00</div>
<div style="position:absolute;right:308px;top:376.60px;font-size:13px;line-height:1;color:#000;font-weight:400;white-space:nowrap;">0,00</div>
<svg style="position:absolute;left:890.5px;top:376px;" width="14" height="14" viewBox="0 0 14 14"><path d="M4.8 0.8 H9.5 Q11 0.8 11 2.3 V11.5 Q11 13 9.5 13 H4.5 Q3 13 3 11.5 V5" fill="none" stroke="#48BE7E" stroke-width="1.2"/><path d="M0.5 0.3 L13.8 13.6" stroke="#48BE7E" stroke-width="1.2"/></svg>
<div style="position:absolute;left:79px;top:393px;width:832px;height:1px;background:#DADADA"></div>
<div style="position:absolute;left:162.5px;top:398.60px;font-size:13px;line-height:1;color:#000;font-weight:400;white-space:nowrap;">HM//13</div>
<div style="position:absolute;left:238px;top:398.60px;font-size:13px;line-height:1;color:#000;font-weight:400;white-space:nowrap;">Vysokozdvižný vozík ...</div>
<div style="position:absolute;right:697px;top:398.60px;font-size:13px;line-height:1;color:#000;font-weight:400;white-space:nowrap;">68 000,00</div>
<div style="position:absolute;right:581px;top:398.60px;font-size:13px;line-height:1;color:#000;font-weight:400;white-space:nowrap;">1.1.2002</div>
<svg style="position:absolute;left:625.5px;top:398px;" width="12" height="14" viewBox="0 0 12 14"><path d="M2.3 6.2 V4.8 Q2.3 0.6 5.55 0.6 Q8.8 0.6 8.8 4.8 V6.2" fill="none" stroke="#44C282" stroke-width="1.4"/><rect x="0.4" y="5.8" width="10.3" height="7.1" fill="#3DBE77"/></svg>
<div style="position:absolute;right:424px;top:398.60px;font-size:13px;line-height:1;color:#000;font-weight:400;white-space:nowrap;">68 000,00</div>
<div style="position:absolute;right:308px;top:398.60px;font-size:13px;line-height:1;color:#000;font-weight:400;white-space:nowrap;">0,00</div>
<svg style="position:absolute;left:890.5px;top:398px;" width="14" height="14" viewBox="0 0 14 14"><path d="M4.8 0.8 H9.5 Q11 0.8 11 2.3 V11.5 Q11 13 9.5 13 H4.5 Q3 13 3 11.5 V5" fill="none" stroke="#48BE7E" stroke-width="1.2"/><path d="M0.5 0.3 L13.8 13.6" stroke="#48BE7E" stroke-width="1.2"/></svg>
<div style="position:absolute;left:79px;top:415px;width:832px;height:1px;background:#DADADA"></div>
<div style="position:absolute;left:162.5px;top:420.60px;font-size:13px;line-height:1;color:#000;font-weight:400;white-space:nowrap;">HM//14</div>
<div style="position:absolute;left:238px;top:420.60px;font-size:13px;line-height:1;color:#000;font-weight:400;white-space:nowrap;">Felicie Combi</div>
<div style="position:absolute;right:697px;top:420.60px;font-size:13px;line-height:1;color:#000;font-weight:400;white-space:nowrap;">417 117,00</div>
<div style="position:absolute;right:581px;top:420.60px;font-size:13px;line-height:1;color:#000;font-weight:400;white-space:nowrap;">1.1.2002</div>
<svg style="position:absolute;left:625.5px;top:420px;" width="12" height="14" viewBox="0 0 12 14"><path d="M2.3 6.2 V4.8 Q2.3 0.6 5.55 0.6 Q8.8 0.6 8.8 4.8 V6.2" fill="none" stroke="#44C282" stroke-width="1.4"/><rect x="0.4" y="5.8" width="10.3" height="7.1" fill="#3DBE77"/></svg>
<div style="position:absolute;right:424px;top:420.60px;font-size:13px;line-height:1;color:#000;font-weight:400;white-space:nowrap;">417 117,00</div>
<div style="position:absolute;right:308px;top:420.60px;font-size:13px;line-height:1;color:#000;font-weight:400;white-space:nowrap;">0,00</div>
<svg style="position:absolute;left:890.5px;top:420px;" width="14" height="14" viewBox="0 0 14 14"><path d="M4.8 0.8 H9.5 Q11 0.8 11 2.3 V11.5 Q11 13 9.5 13 H4.5 Q3 13 3 11.5 V5" fill="none" stroke="#48BE7E" stroke-width="1.2"/><path d="M0.5 0.3 L13.8 13.6" stroke="#48BE7E" stroke-width="1.2"/></svg>
<div style="position:absolute;left:79px;top:437px;width:832px;height:1px;background:#DADADA"></div>
<div style="position:absolute;left:162.5px;top:442.60px;font-size:13px;line-height:1;color:#000;font-weight:400;white-space:nowrap;">HM//15</div>
<div style="position:absolute;left:238px;top:442.60px;font-size:13px;line-height:1;color:#000;font-weight:400;white-space:nowrap;">Školicí středisko</div>
<div style="position:absolute;right:697px;top:442.60px;font-size:13px;line-height:1;color:#000;font-weight:400;white-space:nowrap;">150 000,00</div>
<div style="position:absolute;right:581px;top:442.60px;font-size:13px;line-height:1;color:#000;font-weight:400;white-space:nowrap;">1.1.2002</div>
<svg style="position:absolute;left:625.5px;top:442px;" width="12" height="14" viewBox="0 0 12 14"><path d="M2.3 6.2 V4.8 Q2.3 0.6 5.55 0.6 Q8.8 0.6 8.8 4.8 V6.2" fill="none" stroke="#44C282" stroke-width="1.4"/><rect x="0.4" y="5.8" width="10.3" height="7.1" fill="#3DBE77"/></svg>
<div style="position:absolute;right:424px;top:442.60px;font-size:13px;line-height:1;color:#000;font-weight:400;white-space:nowrap;">150 000,00</div>
<div style="position:absolute;right:308px;top:442.60px;font-size:13px;line-height:1;color:#000;font-weight:400;white-space:nowrap;">15 169,00</div>
<div style="position:absolute;left:79px;top:459px;width:832px;height:1px;background:#DADADA"></div>
<div style="position:absolute;left:162.5px;top:464.60px;font-size:13px;line-height:1;color:#000;font-weight:400;white-space:nowrap;">HM//16</div>
<div style="position:absolute;left:238px;top:464.60px;font-size:13px;line-height:1;color:#000;font-weight:400;white-space:nowrap;">Superb Classic  2.0 TDI</div>
<div style="position:absolute;right:697px;top:464.60px;font-size:13px;line-height:1;color:#000;font-weight:400;white-space:nowrap;">678 900,00</div>
<div style="position:absolute;right:581px;top:464.60px;font-size:13px;line-height:1;color:#000;font-weight:400;white-space:nowrap;">1.1.2002</div>
<svg style="position:absolute;left:625.5px;top:464px;" width="12" height="14" viewBox="0 0 12 14"><path d="M2.3 6.2 V4.8 Q2.3 0.6 5.55 0.6 Q8.8 0.6 8.8 4.8 V6.2" fill="none" stroke="#44C282" stroke-width="1.4"/><rect x="0.4" y="5.8" width="10.3" height="7.1" fill="#3DBE77"/></svg>
<div style="position:absolute;right:424px;top:464.60px;font-size:13px;line-height:1;color:#000;font-weight:400;white-space:nowrap;">678 900,00</div>
<div style="position:absolute;right:308px;top:464.60px;font-size:13px;line-height:1;color:#000;font-weight:400;white-space:nowrap;">0,00</div>
<svg style="position:absolute;left:890.5px;top:464px;" width="14" height="14" viewBox="0 0 14 14"><path d="M4.8 0.8 H9.5 Q11 0.8 11 2.3 V11.5 Q11 13 9.5 13 H4.5 Q3 13 3 11.5 V5" fill="none" stroke="#48BE7E" stroke-width="1.2"/><path d="M0.5 0.3 L13.8 13.6" stroke="#48BE7E" stroke-width="1.2"/></svg>
<div style="position:absolute;left:79px;top:481px;width:832px;height:1px;background:#DADADA"></div>
<div style="position:absolute;left:162.5px;top:486.60px;font-size:13px;line-height:1;color:#000;font-weight:400;white-space:nowrap;">HM//17</div>
<div style="position:absolute;left:238px;top:486.60px;font-size:13px;line-height:1;color:#000;font-weight:400;white-space:nowrap;">Učebna</div>
<div style="position:absolute;right:697px;top:486.60px;font-size:13px;line-height:1;color:#000;font-weight:400;white-space:nowrap;">100 000,00</div>
<div style="position:absolute;right:581px;top:486.60px;font-size:13px;line-height:1;color:#000;font-weight:400;white-space:nowrap;">30.10.2007</div>
<svg style="position:absolute;left:624px;top:486px;" width="15" height="14" viewBox="0 0 15 14"><path d="M8.3 3.8 V1.6 H1.8 V11.9 H8.3 V9.3" fill="none" stroke="#1A1A1A" stroke-width="1.4" stroke-linejoin="round"/><path d="M5 6.6 H12.6" stroke="#F04A50" stroke-width="1.3"/><path d="M10.6 4.5 L12.9 6.6 L10.6 8.7" fill="none" stroke="#F04A50" stroke-width="1.3"/></svg>
<div style="position:absolute;right:424px;top:486.60px;font-size:13px;line-height:1;color:#000;font-weight:400;white-space:nowrap;">150 000,00</div>
<div style="position:absolute;right:308px;top:486.60px;font-size:13px;line-height:1;color:#000;font-weight:400;white-space:nowrap;">0,00</div>
<svg style="position:absolute;left:890.5px;top:486px;" width="14" height="14" viewBox="0 0 14 14"><path d="M4.8 0.8 H9.5 Q11 0.8 11 2.3 V11.5 Q11 13 9.5 13 H4.5 Q3 13 3 11.5 V5" fill="none" stroke="#48BE7E" stroke-width="1.2"/><path d="M0.5 0.3 L13.8 13.6" stroke="#48BE7E" stroke-width="1.2"/></svg>
<div style="position:absolute;left:79px;top:503px;width:832px;height:1px;background:#DADADA"></div>
<div style="position:absolute;left:162.5px;top:508.60px;font-size:13px;line-height:1;color:#000;font-weight:400;white-space:nowrap;">HM//18</div>
<div style="position:absolute;left:238px;top:508.60px;font-size:13px;line-height:1;color:#000;font-weight:400;white-space:nowrap;">Ředitelství firmy B 01</div>
<div style="position:absolute;right:697px;top:508.60px;font-size:13px;line-height:1;color:#000;font-weight:400;white-space:nowrap;">12 860 000,00</div>
<div style="position:absolute;right:581px;top:508.60px;font-size:13px;line-height:1;color:#000;font-weight:400;white-space:nowrap;">24.2.2009</div>
<svg style="position:absolute;left:625.5px;top:508px;" width="12" height="14" viewBox="0 0 12 14"><path d="M2.3 6.2 V4.8 Q2.3 0.6 5.55 0.6 Q8.8 0.6 8.8 4.8 V6.2" fill="none" stroke="#44C282" stroke-width="1.4"/><rect x="0.4" y="5.8" width="10.3" height="7.1" fill="#3DBE77"/></svg>
<div style="position:absolute;right:424px;top:508.60px;font-size:13px;line-height:1;color:#000;font-weight:400;white-space:nowrap;">12 165 000,00</div>
<div style="position:absolute;right:308px;top:508.60px;font-size:13px;line-height:1;color:#000;font-weight:400;white-space:nowrap;">9 337 854,00</div>
<svg style="position:absolute;left:126px;top:509px;" width="12" height="12" viewBox="0 0 12 12"><rect x="0.6" y="0.6" width="6.8" height="10.8" rx="0.6" fill="#FFF" stroke="#1A1A1A" stroke-width="1.2"/><rect x="2" y="2" width="4" height="1.2" fill="#111"/><rect x="2" y="4" width="4" height="1.2" fill="#111"/><rect x="2" y="6" width="2.5" height="1.2" fill="#555"/><rect x="9" y="0" width="3" height="3.2" rx="0.6" fill="#F05A5A"/><rect x="9" y="4" width="3" height="3.2" rx="0.6" fill="#3DBE77"/><rect x="9" y="8" width="3" height="3.6" rx="0.6" fill="#2F6CC0"/></svg>
<div style="position:absolute;left:79px;top:525px;width:832px;height:1px;background:#DADADA"></div>
<div style="position:absolute;left:162.5px;top:530.60px;font-size:13px;line-height:1;color:#000;font-weight:400;white-space:nowrap;">HM//19</div>
<div style="position:absolute;left:238px;top:530.60px;font-size:13px;line-height:1;color:#000;font-weight:400;white-space:nowrap;">Majetek, sk 2, mimoř...</div>
<div style="position:absolute;right:697px;top:530.60px;font-size:13px;line-height:1;color:#000;font-weight:400;white-space:nowrap;">150 003,00</div>
<div style="position:absolute;right:581px;top:530.60px;font-size:13px;line-height:1;color:#000;font-weight:400;white-space:nowrap;">1.2.2009</div>
<svg style="position:absolute;left:625.5px;top:530px;" width="12" height="14" viewBox="0 0 12 14"><path d="M2.3 6.2 V4.8 Q2.3 0.6 5.55 0.6 Q8.8 0.6 8.8 4.8 V6.2" fill="none" stroke="#44C282" stroke-width="1.4"/><rect x="0.4" y="5.8" width="10.3" height="7.1" fill="#3DBE77"/></svg>
<div style="position:absolute;right:424px;top:530.60px;font-size:13px;line-height:1;color:#000;font-weight:400;white-space:nowrap;">150 003,00</div>
<div style="position:absolute;right:308px;top:530.60px;font-size:13px;line-height:1;color:#000;font-weight:400;white-space:nowrap;">0,00</div>
<svg style="position:absolute;left:890.5px;top:530px;" width="14" height="14" viewBox="0 0 14 14"><path d="M4.8 0.8 H9.5 Q11 0.8 11 2.3 V11.5 Q11 13 9.5 13 H4.5 Q3 13 3 11.5 V5" fill="none" stroke="#48BE7E" stroke-width="1.2"/><path d="M0.5 0.3 L13.8 13.6" stroke="#48BE7E" stroke-width="1.2"/></svg>
<div style="position:absolute;left:79px;top:547px;width:832px;height:1px;background:#DADADA"></div>
<div style="position:absolute;left:162.5px;top:552.60px;font-size:13px;line-height:1;color:#000;font-weight:400;white-space:nowrap;">HM//20</div>
<div style="position:absolute;left:238px;top:552.60px;font-size:13px;line-height:1;color:#000;font-weight:400;white-space:nowrap;">Pracovní plošina</div>
<div style="position:absolute;right:697px;top:552.60px;font-size:13px;line-height:1;color:#000;font-weight:400;white-space:nowrap;">167 796,00</div>
<div style="position:absolute;right:581px;top:552.60px;font-size:13px;line-height:1;color:#000;font-weight:400;white-space:nowrap;">29.9.2009</div>
<svg style="position:absolute;left:625.5px;top:552px;" width="12" height="14" viewBox="0 0 12 14"><path d="M2.3 6.2 V4.8 Q2.3 0.6 5.55 0.6 Q8.8 0.6 8.8 4.8 V6.2" fill="none" stroke="#44C282" stroke-width="1.4"/><rect x="0.4" y="5.8" width="10.3" height="7.1" fill="#3DBE77"/></svg>
<div style="position:absolute;right:424px;top:552.60px;font-size:13px;line-height:1;color:#000;font-weight:400;white-space:nowrap;">167 796,00</div>
<div style="position:absolute;right:308px;top:552.60px;font-size:13px;line-height:1;color:#000;font-weight:400;white-space:nowrap;">102 680,00</div>
<div style="position:absolute;left:79px;top:569px;width:832px;height:1px;background:#DADADA"></div>
<div style="position:absolute;left:162.5px;top:574.60px;font-size:13px;line-height:1;color:#000;font-weight:400;white-space:nowrap;">HM//21</div>
<div style="position:absolute;left:238px;top:574.60px;font-size:13px;line-height:1;color:#000;font-weight:400;white-space:nowrap;">Notebook ASUS</div>
<div style="position:absolute;right:697px;top:574.60px;font-size:13px;line-height:1;color:#000;font-weight:400;white-space:nowrap;">36 870,00</div>
<div style="position:absolute;right:581px;top:574.60px;font-size:13px;line-height:1;color:#000;font-weight:400;white-space:nowrap;">23.12.2007</div>
<svg style="position:absolute;left:625.5px;top:574px;" width="12" height="14" viewBox="0 0 12 14"><path d="M2.3 6.2 V4.8 Q2.3 0.6 5.55 0.6 Q8.8 0.6 8.8 4.8 V6.2" fill="none" stroke="#44C282" stroke-width="1.4"/><rect x="0.4" y="5.8" width="10.3" height="7.1" fill="#3DBE77"/></svg>
<div style="position:absolute;right:424px;top:574.60px;font-size:13px;line-height:1;color:#000;font-weight:400;white-space:nowrap;">36 870,00</div>
<div style="position:absolute;right:308px;top:574.60px;font-size:13px;line-height:1;color:#000;font-weight:400;white-space:nowrap;">0,00</div>
<svg style="position:absolute;left:890.5px;top:574px;" width="14" height="14" viewBox="0 0 14 14"><path d="M4.8 0.8 H9.5 Q11 0.8 11 2.3 V11.5 Q11 13 9.5 13 H4.5 Q3 13 3 11.5 V5" fill="none" stroke="#48BE7E" stroke-width="1.2"/><path d="M0.5 0.3 L13.8 13.6" stroke="#48BE7E" stroke-width="1.2"/></svg>
<div style="position:absolute;left:79px;top:591px;width:832px;height:1px;background:#DADADA"></div>
<div style="position:absolute;left:162.5px;top:596.60px;font-size:13px;line-height:1;color:#000;font-weight:400;white-space:nowrap;">HM//22</div>
<div style="position:absolute;left:238px;top:596.60px;font-size:13px;line-height:1;color:#000;font-weight:400;white-space:nowrap;">Pracovní plošina IPT 14</div>
<div style="position:absolute;right:697px;top:596.60px;font-size:13px;line-height:1;color:#000;font-weight:400;white-space:nowrap;">174 500,00</div>
<div style="position:absolute;right:581px;top:596.60px;font-size:13px;line-height:1;color:#000;font-weight:400;white-space:nowrap;">2.1.2012</div>
<svg style="position:absolute;left:625.5px;top:596px;" width="12" height="14" viewBox="0 0 12 14"><path d="M2.3 6.2 V4.8 Q2.3 0.6 5.55 0.6 Q8.8 0.6 8.8 4.8 V6.2" fill="none" stroke="#44C282" stroke-width="1.4"/><rect x="0.4" y="5.8" width="10.3" height="7.1" fill="#3DBE77"/></svg>
<div style="position:absolute;right:424px;top:596.60px;font-size:13px;line-height:1;color:#000;font-weight:400;white-space:nowrap;">174 500,00</div>
<div style="position:absolute;right:308px;top:596.60px;font-size:13px;line-height:1;color:#000;font-weight:400;white-space:nowrap;">124 593,00</div>
<div style="position:absolute;left:79px;top:613px;width:832px;height:1px;background:#DADADA"></div>
<div style="position:absolute;left:162.5px;top:618.60px;font-size:13px;line-height:1;color:#000;font-weight:400;white-space:nowrap;">HM//23</div>
<div style="position:absolute;left:238px;top:618.60px;font-size:13px;line-height:1;color:#000;font-weight:400;white-space:nowrap;">Přístavek</div>
<div style="position:absolute;right:697px;top:618.60px;font-size:13px;line-height:1;color:#000;font-weight:400;white-space:nowrap;">695 000,00</div>
<div style="position:absolute;right:581px;top:618.60px;font-size:13px;line-height:1;color:#000;font-weight:400;white-space:nowrap;">24.2.2009</div>
<svg style="position:absolute;left:625.5px;top:618px;" width="12" height="14" viewBox="0 0 12 14"><path d="M2.3 6.2 V4.8 Q2.3 0.6 5.55 0.6 Q8.8 0.6 8.8 4.8 V6.2" fill="none" stroke="#44C282" stroke-width="1.4"/><rect x="0.4" y="5.8" width="10.3" height="7.1" fill="#3DBE77"/></svg>
<div style="position:absolute;right:424px;top:618.60px;font-size:13px;line-height:1;color:#000;font-weight:400;white-space:nowrap;">695 000,00</div>
<div style="position:absolute;right:308px;top:618.60px;font-size:13px;line-height:1;color:#000;font-weight:400;white-space:nowrap;">533 482,00</div>
<svg style="position:absolute;left:126px;top:619px;" width="12" height="12" viewBox="0 0 12 12"><rect x="0.6" y="0.6" width="6.8" height="10.8" rx="0.6" fill="#FFF" stroke="#1A1A1A" stroke-width="1.2"/><rect x="2" y="2" width="4" height="1.2" fill="#111"/><rect x="2" y="4" width="4" height="1.2" fill="#111"/><rect x="2" y="6" width="2.5" height="1.2" fill="#555"/><rect x="9" y="0" width="3" height="3.2" rx="0.6" fill="#F05A5A"/><rect x="9" y="4" width="3" height="3.2" rx="0.6" fill="#3DBE77"/><rect x="9" y="8" width="3" height="3.6" rx="0.6" fill="#2F6CC0"/></svg>
<div style="position:absolute;left:79px;top:635px;width:832px;height:1px;background:#DADADA"></div>
<div style="position:absolute;left:162.5px;top:640.60px;font-size:13px;line-height:1;color:#000;font-weight:400;white-space:nowrap;">HM//24</div>
<div style="position:absolute;left:238px;top:640.60px;font-size:13px;line-height:1;color:#000;font-weight:400;white-space:nowrap;">Budova školicího stře...</div>
<div style="position:absolute;right:697px;top:640.60px;font-size:13px;line-height:1;color:#000;font-weight:400;white-space:nowrap;">5 500 000,00</div>
<div style="position:absolute;right:581px;top:640.60px;font-size:13px;line-height:1;color:#000;font-weight:400;white-space:nowrap;">1.9.2011</div>
<svg style="position:absolute;left:625.5px;top:640px;" width="12" height="14" viewBox="0 0 12 14"><path d="M2.3 6.2 V4.8 Q2.3 0.6 5.55 0.6 Q8.8 0.6 8.8 4.8 V6.2" fill="none" stroke="#44C282" stroke-width="1.4"/><rect x="0.4" y="5.8" width="10.3" height="7.1" fill="#3DBE77"/></svg>
<div style="position:absolute;right:424px;top:640.60px;font-size:13px;line-height:1;color:#000;font-weight:400;white-space:nowrap;">8 144 344,00</div>
<div style="position:absolute;right:308px;top:640.60px;font-size:13px;line-height:1;color:#000;font-weight:400;white-space:nowrap;">6 192 836,76</div>
<svg style="position:absolute;left:126px;top:641px;" width="12" height="12" viewBox="0 0 12 12"><rect x="0.6" y="0.6" width="6.8" height="10.8" rx="0.6" fill="#FFF" stroke="#1A1A1A" stroke-width="1.2"/><rect x="2" y="2" width="4" height="1.2" fill="#111"/><rect x="2" y="4" width="4" height="1.2" fill="#111"/><rect x="2" y="6" width="2.5" height="1.2" fill="#555"/><rect x="9" y="0" width="3" height="3.2" rx="0.6" fill="#F05A5A"/><rect x="9" y="4" width="3" height="3.2" rx="0.6" fill="#3DBE77"/><rect x="9" y="8" width="3" height="3.6" rx="0.6" fill="#2F6CC0"/></svg>
<div style="position:absolute;left:79px;top:657px;width:832px;height:1px;background:#DADADA"></div>
<div style="position:absolute;left:162.5px;top:662.60px;font-size:13px;line-height:1;color:#000;font-weight:400;white-space:nowrap;">HM//25</div>
<div style="position:absolute;left:238px;top:662.60px;font-size:13px;line-height:1;color:#000;font-weight:400;white-space:nowrap;">Budova prodejny</div>
<div style="position:absolute;right:697px;top:662.60px;font-size:13px;line-height:1;color:#000;font-weight:400;white-space:nowrap;">1 750 800,00</div>
<div style="position:absolute;right:581px;top:662.60px;font-size:13px;line-height:1;color:#000;font-weight:400;white-space:nowrap;">20.2.2020</div>
<svg style="position:absolute;left:625.5px;top:662px;" width="12" height="14" viewBox="0 0 12 14"><path d="M2.3 6.2 V4.8 Q2.3 0.6 5.55 0.6 Q8.8 0.6 8.8 4.8 V6.2" fill="none" stroke="#44C282" stroke-width="1.4"/><rect x="0.4" y="5.8" width="10.3" height="7.1" fill="#3DBE77"/></svg>
<div style="position:absolute;right:424px;top:662.60px;font-size:13px;line-height:1;color:#000;font-weight:400;white-space:nowrap;">1 798 300,00</div>
<div style="position:absolute;right:308px;top:662.60px;font-size:13px;line-height:1;color:#000;font-weight:400;white-space:nowrap;">1 773 123,00</div>
<div style="position:absolute;left:79px;top:679px;width:832px;height:1px;background:#DADADA"></div>
<div style="position:absolute;left:80px;top:680px;width:831px;height:22px;background:#E3E3E3"></div>
<div style="position:absolute;left:162.5px;top:684.60px;font-size:13px;line-height:1;color:#000;font-weight:400;white-space:nowrap;">HM//26</div>
<div style="position:absolute;left:238px;top:684.60px;font-size:13px;line-height:1;color:#000;font-weight:400;white-space:nowrap;">Klimatizační jednotka</div>
<div style="position:absolute;right:697px;top:684.60px;font-size:13px;line-height:1;color:#000;font-weight:400;white-space:nowrap;">163 800,77</div>
<div style="position:absolute;right:581px;top:684.60px;font-size:13px;line-height:1;color:#000;font-weight:400;white-space:nowrap;">1.9.2011</div>
<svg style="position:absolute;left:625.5px;top:684px;" width="12" height="14" viewBox="0 0 12 14"><path d="M2.3 6.2 V4.8 Q2.3 0.6 5.55 0.6 Q8.8 0.6 8.8 4.8 V6.2" fill="none" stroke="#44C282" stroke-width="1.4"/><rect x="0.4" y="5.8" width="10.3" height="7.1" fill="#3DBE77"/></svg>
<div style="position:absolute;right:424px;top:684.60px;font-size:13px;line-height:1;color:#000;font-weight:400;white-space:nowrap;">250 000,01</div>
<div style="position:absolute;right:308px;top:684.60px;font-size:13px;line-height:1;color:#000;font-weight:400;white-space:nowrap;">190 096,25</div>
<svg style="position:absolute;left:126px;top:685px;" width="12" height="12" viewBox="0 0 12 12"><rect x="0.6" y="0.6" width="6.8" height="10.8" rx="0.6" fill="#FFF" stroke="#1A1A1A" stroke-width="1.2"/><rect x="2" y="2" width="4" height="1.2" fill="#111"/><rect x="2" y="4" width="4" height="1.2" fill="#111"/><rect x="2" y="6" width="2.5" height="1.2" fill="#555"/><rect x="9" y="0" width="3" height="3.2" rx="0.6" fill="#F05A5A"/><rect x="9" y="4" width="3" height="3.2" rx="0.6" fill="#3DBE77"/><rect x="9" y="8" width="3" height="3.6" rx="0.6" fill="#2F6CC0"/></svg>
<div style="position:absolute;left:79px;top:701px;width:832px;height:1px;background:#DADADA"></div>
<div style="position:absolute;left:79px;top:217px;width:832px;height:1px;background:#DADADA"></div>
<div style="position:absolute;left:107px;top:196px;width:1px;height:506px;background:#DADADA"></div>
<div style="position:absolute;left:156px;top:196px;width:1px;height:506px;background:#DADADA"></div>
<div style="position:absolute;left:232px;top:196px;width:1px;height:506px;background:#DADADA"></div>
<div style="position:absolute;left:378px;top:196px;width:1px;height:506px;background:#DADADA"></div>
<div style="position:absolute;left:494px;top:196px;width:1px;height:506px;background:#DADADA"></div>
<div style="position:absolute;left:610px;top:196px;width:1px;height:506px;background:#DADADA"></div>
<div style="position:absolute;left:651px;top:196px;width:1px;height:506px;background:#DADADA"></div>
<div style="position:absolute;left:767px;top:196px;width:1px;height:506px;background:#DADADA"></div>
<div style="position:absolute;left:883px;top:196px;width:1px;height:506px;background:#DADADA"></div>
<div style="position:absolute;left:911px;top:196px;width:1px;height:506px;background:#DADADA"></div>
<div style="position:absolute;left:912px;top:196px;width:19px;height:528px;background:#F0F0F0"></div>
<div style="position:absolute;left:931px;top:171px;width:1px;height:578px;background:#D0D0D0"></div>
<svg style="position:absolute;left:917px;top:201px;" width="10" height="7" viewBox="0 0 10 7"><path d="M1 6 L5 2 L9 6" stroke="#555" stroke-width="1.8" fill="none"/></svg>
<div style="position:absolute;left:915px;top:451px;width:15px;height:17px;background:#CDCDCD"></div>
<svg style="position:absolute;left:917px;top:712.5px;" width="10" height="7" viewBox="0 0 10 7"><path d="M1 1 L5 5 L9 1" stroke="#555" stroke-width="1.8" fill="none"/></svg>
<div style="position:absolute;left:79px;top:702px;width:832px;height:22px;background:#FCFCFC"></div>
<div style="position:absolute;left:79px;top:723px;width:853px;height:1px;background:#D4D4D4"></div>
<div style="position:absolute;left:79px;top:724px;width:853px;height:25px;background:#F0F0F0"></div>
<div style="position:absolute;left:79px;top:749px;width:853px;height:1px;background:#D4D4D4"></div>
<div style="position:absolute;left:931px;top:723px;width:1px;height:27px;background:#D0D0D0"></div>
<div style="position:absolute;left:80px;top:725px;width:23px;height:23px;background:#D0D0D0;box-sizing:border-box;border:2px solid #7E7E7E"></div>
<svg style="position:absolute;left:83px;top:729px;" width="18" height="15" viewBox="0 0 18 15"><g fill="none" stroke="#1F5FB0" stroke-width="1.3"><path d="M0.7 1.5 Q4.5 0.3 8.5 1.5 V13.5 Q4.5 12.3 0.7 13.5 Z"/><path d="M8.5 1.5 Q12.5 0.3 16.3 1.5 V13.5 Q12.5 12.3 8.5 13.5"/></g></svg>
<svg style="position:absolute;left:108.6px;top:729.3px;" width="16" height="16" viewBox="0 0 16 16"><rect x="1.5" y="1" width="11.5" height="2.4" fill="#8FB2DE"/><path d="M3 0.7 H11.8 L13.8 2.8 V13.6 H0.7 V2.8 Z M0.7 3.4 H13.8" fill="none" stroke="#1F5FB0" stroke-width="1.3" stroke-linejoin="round"/><path d="M6.2 6.6 H9.2" stroke="#1F5FB0" stroke-width="1.3"/></svg>
<svg style="position:absolute;left:132px;top:729px;" width="18" height="19" viewBox="0 0 18 19"><path d="M1.2 0.9 H14.3 L9.2 7.6 V15 L6.3 12.2 V7.6 Z" fill="none" stroke="#1F5FB0" stroke-width="1.3" stroke-linejoin="round"/><rect x="1" y="0.2" width="13.5" height="2" fill="#1F5FB0"/><path d="M11.7 14.2 L17.5 14.2 L14.6 17.8 Z" fill="#1F5FB0"/></svg>
<div style="position:absolute;left:152px;top:726px;width:1px;height:21px;background:#D0D0D0"></div>
<svg style="position:absolute;left:158px;top:729px;" width="16" height="16" viewBox="0 0 16 16"><g stroke-linecap="round"><path d="M8 1.8 V14.2 M2.6 4.9 L13.4 11.1 M2.6 11.1 L13.4 4.9" stroke="#1F5FB0" stroke-width="3.6"/><path d="M8 1.8 V14.2 M2.6 4.9 L13.4 11.1 M2.6 11.1 L13.4 4.9" stroke="#F0F0F0" stroke-width="1.1"/></g><circle cx="8" cy="8" r="1.6" fill="#F0F0F0"/></svg>
<div style="position:absolute;left:181.5px;top:730.84px;font-size:12px;line-height:1;color:#1F5FB0;font-weight:400;white-space:nowrap;">0</div>
<div style="position:absolute;left:196px;top:727px;width:1px;height:19px;background:#D0D0D0"></div>
<div style="position:absolute;left:202px;top:731.18px;font-size:11.6px;line-height:1;color:#1F5FB0;font-weight:400;white-space:nowrap;">Počet záznamů</div>
<div style="position:absolute;left:290px;top:727px;width:1px;height:19px;background:#D0D0D0"></div>
<div style="position:absolute;left:879px;top:727px;width:1px;height:19px;background:#D0D0D0"></div>
<svg style="position:absolute;left:884px;top:729px;" width="15" height="15" viewBox="0 0 15 15"><path d="M13 1.5 V0.7 H1 L7 7.5 L1 14.3 H13 V13.5" fill="none" stroke="#1F5FB0" stroke-width="1.3"/></svg>
<div style="position:absolute;left:905px;top:727px;width:1px;height:19px;background:#D0D0D0"></div>
<svg style="position:absolute;left:910px;top:727px;" width="18" height="18" viewBox="0 0 18 18"><path d="M2 15 L3 11 L12.5 1.5 Q13.5 0.8 14.5 1.5 L15.5 2.5 Q16.2 3.5 15.5 4.5 L6 14 Z M10.5 3.5 L13.5 6.5" fill="none" stroke="#1F5FB0" stroke-width="1.3"/><path d="M9 16.5 H17" stroke="#1F5FB0" stroke-width="1.3"/></svg>
<div style="position:absolute;left:958.3px;top:46.65px;font-size:20.5px;line-height:1;color:#FFFFFF;font-weight:400;white-space:nowrap;letter-spacing:0.4px">HM//26</div>
<svg style="position:absolute;left:1160px;top:47px;" width="15" height="15" viewBox="0 0 15 15"><g fill="none" stroke="#FFF" stroke-width="1.3"><path d="M6.5 5.8 H1.6 V13.4 H9.4 V10.2"/><path d="M4.8 1.6 H13.4 V10.2"/><path d="M5.3 9.7 L10.2 4.8"/></g><path d="M7.4 3.6 H11.4 V7.6 Z" fill="#FFF"/></svg>
<div style="position:absolute;left:955px;top:79px;width:225px;height:25px;background:#00ADEF"></div>
<div style="position:absolute;left:1155px;top:82px;width:1px;height:19px;background:#0A8FCB"></div>
<svg style="position:absolute;left:1160px;top:87px;" width="16" height="10" viewBox="0 0 16 10"><path d="M1 8 L7.5 1.5 L14 8" stroke="#FFF" stroke-width="1.3" fill="none"/></svg>
<div style="position:absolute;left:959px;top:85.80px;font-size:13px;line-height:1;color:#FFFFFF;font-weight:700;white-space:nowrap;">Základní údaje</div>
<div style="position:absolute;left:955px;top:104px;width:225px;height:218px;background:#FAFAFA"></div>
<div style="position:absolute;left:962.5px;top:111.34px;font-size:12px;line-height:1;color:#284DA6;font-weight:400;white-space:nowrap;">Název:</div>
<div style="position:absolute;right:13.5px;top:111.34px;font-size:12px;line-height:1;color:#000;font-weight:400;white-space:nowrap;">Klimatizační jednotka</div>
<div style="position:absolute;left:962px;top:128px;width:211px;height:1px;background:#E3E3E3"></div>
<div style="position:absolute;left:962.5px;top:134.20px;font-size:12px;line-height:1;color:#284DA6;font-weight:400;white-space:nowrap;">Inventární číslo:</div>
<div style="position:absolute;right:13.5px;top:134.20px;font-size:12px;line-height:1;color:#000;font-weight:400;white-space:nowrap;">HM/24</div>
<div style="position:absolute;left:962px;top:150px;width:211px;height:1px;background:#E3E3E3"></div>
<div style="position:absolute;left:962.5px;top:157.06px;font-size:12px;line-height:1;color:#284DA6;font-weight:400;white-space:nowrap;">Vstupní cena:</div>
<div style="position:absolute;right:13.5px;top:157.06px;font-size:12px;line-height:1;color:#000;font-weight:400;white-space:nowrap;">163 800,77</div>
<div style="position:absolute;left:962px;top:173px;width:211px;height:1px;background:#E3E3E3"></div>
<div style="position:absolute;left:962.5px;top:179.92px;font-size:12px;line-height:1;color:#284DA6;font-weight:400;white-space:nowrap;">Pořízeno:</div>
<div style="position:absolute;right:13.5px;top:179.92px;font-size:12px;line-height:1;color:#000;font-weight:400;white-space:nowrap;">15.8.2011</div>
<div style="position:absolute;left:962px;top:196px;width:211px;height:1px;background:#E3E3E3"></div>
<div style="position:absolute;left:962.5px;top:202.78px;font-size:12px;line-height:1;color:#284DA6;font-weight:400;white-space:nowrap;">Zařazeno do užívání:</div>
<div style="position:absolute;right:13.5px;top:202.78px;font-size:12px;line-height:1;color:#000;font-weight:400;white-space:nowrap;">1.9.2011</div>
<div style="position:absolute;left:962px;top:219px;width:211px;height:1px;background:#E3E3E3"></div>
<div style="position:absolute;left:962.5px;top:225.64px;font-size:12px;line-height:1;color:#284DA6;font-weight:400;white-space:nowrap;">Navedeno v programu:</div>
<div style="position:absolute;right:13.5px;top:225.64px;font-size:12px;line-height:1;color:#000;font-weight:400;white-space:nowrap;">15.2.2021</div>
<div style="position:absolute;left:962px;top:242px;width:211px;height:1px;background:#E3E3E3"></div>
<div style="position:absolute;left:962.5px;top:248.50px;font-size:12px;line-height:1;color:#284DA6;font-weight:400;white-space:nowrap;">Obor majetku:</div>
<div style="position:absolute;right:13.5px;top:248.50px;font-size:12px;line-height:1;color:#000;font-weight:400;white-space:nowrap;">021</div>
<div style="position:absolute;left:962px;top:265px;width:211px;height:1px;background:#E3E3E3"></div>
<div style="position:absolute;left:962.5px;top:271.36px;font-size:12px;line-height:1;color:#284DA6;font-weight:400;white-space:nowrap;">Odpisová skupina:</div>
<div style="position:absolute;right:13.5px;top:271.36px;font-size:12px;line-height:1;color:#000;font-weight:400;white-space:nowrap;">6</div>
<div style="position:absolute;left:962px;top:288px;width:211px;height:1px;background:#E3E3E3"></div>
<svg style="position:absolute;left:1154px;top:294px;" width="16" height="18" viewBox="0 0 16 18"><path d="M3.8 8 V5.5 Q3.8 1.6 7.8 1.6 Q11.8 1.6 11.8 5.5 V8" fill="none" stroke="#44C282" stroke-width="1.6"/><rect x="0.5" y="7.8" width="15" height="9.8" fill="#3DBE77"/></svg>
<div style="position:absolute;left:955px;top:328px;width:225px;height:25px;background:#00ADEF"></div>
<div style="position:absolute;left:1155px;top:331px;width:1px;height:19px;background:#0A8FCB"></div>
<svg style="position:absolute;left:1160px;top:336px;" width="16" height="10" viewBox="0 0 16 10"><path d="M1 8 L7.5 1.5 L14 8" stroke="#FFF" stroke-width="1.3" fill="none"/></svg>
<div style="position:absolute;left:959px;top:334.80px;font-size:13px;line-height:1;color:#FFFFFF;font-weight:700;white-space:nowrap;">Ostatní údaje</div>
<div style="position:absolute;left:955px;top:353px;width:225px;height:50px;background:#FAFAFA"></div>
<div style="position:absolute;left:962.5px;top:361.04px;font-size:12px;line-height:1;color:#284DA6;font-weight:400;white-space:nowrap;">Vytvořil:</div>
<div style="position:absolute;right:13.5px;top:361.04px;font-size:12px;line-height:1;white-space:nowrap;color:#000;letter-spacing:-0.55px">K2 <span style="color:#2356B5">04.03.2021 09:28:49</span></div>
<div style="position:absolute;left:962px;top:374px;width:211px;height:1px;background:#E3E3E3"></div>
<div style="position:absolute;left:962.5px;top:383.04px;font-size:12px;line-height:1;color:#284DA6;font-weight:400;white-space:nowrap;">Změnil:</div>
<div style="position:absolute;right:13.5px;top:383.04px;font-size:12px;line-height:1;white-space:nowrap;color:#000;letter-spacing:-0.55px">K2 <span style="color:#2356B5">04.03.2021 09:33:30</span></div>
<div style="position:absolute;left:962px;top:396px;width:211px;height:1px;background:#E3E3E3"></div>
<div style="position:absolute;left:955px;top:596px;width:225px;height:25px;background:#00ADEF"></div>
<div style="position:absolute;left:1155px;top:599px;width:1px;height:19px;background:#0A8FCB"></div>
<svg style="position:absolute;left:1160px;top:604px;" width="16" height="10" viewBox="0 0 16 10"><path d="M1 8 L7.5 1.5 L14 8" stroke="#FFF" stroke-width="1.3" fill="none"/></svg>
<div style="position:absolute;left:959px;top:602.80px;font-size:13px;line-height:1;color:#FFFFFF;font-weight:700;white-space:nowrap;">Parametry</div>
<div style="position:absolute;left:955px;top:621px;width:225px;height:51px;background:#FAFAFA"></div>
<div style="position:absolute;left:969px;top:628.54px;font-size:12px;line-height:1;color:#284DA6;font-weight:400;white-space:nowrap;">Období od</div>
<div style="position:absolute;left:1078.5px;top:628.54px;font-size:12px;line-height:1;color:#284DA6;font-weight:400;white-space:nowrap;">Období do</div>
<div style="position:absolute;left:962px;top:642px;width:103px;height:23px;background:#FFFDE3;box-sizing:border-box;border:2px solid #00ADEF"></div>
<div style="position:absolute;left:965.5px;top:649.42px;font-size:12.5px;line-height:1;color:#000;font-weight:400;white-space:nowrap;">Leden/2021</div>
<svg style="position:absolute;left:1047.5px;top:649px;" width="12" height="10" viewBox="0 0 12 10"><g fill="#0C4FA6"><rect x="0.4" y="0" width="3" height="3" rx="0.4"/><rect x="4.5" y="0" width="3" height="3" rx="0.4"/><rect x="8.6" y="0" width="3" height="3" rx="0.4"/></g><path d="M0.6 4.3 L6 8.8 L11.4 4.3" stroke="#245EB0" stroke-width="1.3" fill="none"/></svg>
<div style="position:absolute;left:1071px;top:642px;width:102px;height:23px;background:#FFFDE3;box-sizing:border-box;border:1px solid #00ADEF"></div>
<div style="position:absolute;left:1074px;top:649.42px;font-size:12.5px;line-height:1;color:#000;font-weight:400;white-space:nowrap;">Březen/2021</div>
<svg style="position:absolute;left:1156.5px;top:649px;" width="12" height="10" viewBox="0 0 12 10"><g fill="#0C4FA6"><rect x="0.4" y="0" width="3" height="3" rx="0.4"/><rect x="4.5" y="0" width="3" height="3" rx="0.4"/><rect x="8.6" y="0" width="3" height="3" rx="0.4"/></g><path d="M0.6 4.3 L6 8.8 L11.4 4.3" stroke="#245EB0" stroke-width="1.3" fill="none"/></svg>
<div style="position:absolute;left:955px;top:678px;width:225px;height:25px;background:#00ADEF"></div>
<div style="position:absolute;left:1155px;top:681px;width:1px;height:19px;background:#0A8FCB"></div>
<svg style="position:absolute;left:1160px;top:686px;" width="16" height="10" viewBox="0 0 16 10"><path d="M1 8 L7.5 1.5 L14 8" stroke="#FFF" stroke-width="1.3" fill="none"/></svg>
<div style="position:absolute;left:959px;top:684.80px;font-size:13px;line-height:1;color:#FFFFFF;font-weight:700;white-space:nowrap;">Nastavení</div>
<div style="position:absolute;left:955px;top:703px;width:225px;height:50px;background:#FAFAFA"></div>
<div style="position:absolute;left:969px;top:710.84px;font-size:12px;line-height:1;color:#284DA6;font-weight:400;white-space:nowrap;">Období</div>
<div style="position:absolute;left:962px;top:724px;width:211px;height:23px;background:#FFFDE3;box-sizing:border-box;border:1px solid #00ADEF"></div>
<div style="position:absolute;left:965.5px;top:731.42px;font-size:12.5px;line-height:1;color:#000;font-weight:400;white-space:nowrap;">2021</div>
<svg style="position:absolute;left:1156.5px;top:731px;" width="12" height="10" viewBox="0 0 12 10"><g fill="#0C4FA6"><rect x="0.4" y="0" width="3" height="3" rx="0.4"/><rect x="4.5" y="0" width="3" height="3" rx="0.4"/><rect x="8.6" y="0" width="3" height="3" rx="0.4"/></g><path d="M0.6 4.3 L6 8.8 L11.4 4.3" stroke="#245EB0" stroke-width="1.3" fill="none"/></svg>
<div style="position:absolute;left:366px;top:380px;width:302px;height:106px;background:#DCF1FC;box-sizing:border-box;border:1px solid #707070"></div>
<div style="position:absolute;left:367px;top:381px;width:300px;height:30px;background:#FFFFFF"></div>
<svg style="position:absolute;left:375px;top:388px;" width="17" height="17" viewBox="0 0 17 17"><defs><linearGradient id="kg2" x1="0" y1="1" x2="1" y2="0"><stop offset="0" stop-color="#2ED8C8"/><stop offset="0.6" stop-color="#12C8F5"/><stop offset="1" stop-color="#1E6CF0"/></linearGradient></defs><rect x="0" y="0" width="2" height="16" fill="#0A3E9A"/><text x="3.4" y="9.9" font-size="6.6" font-weight="700" fill="#000" font-family="Liberation Sans">K2</text><path d="M6 14.5 Q9 15.5 11 13.5 Q15 12 16 8.5 L16.5 13 Q16 16 12 16.2 Q8 16.5 6 14.5 Z" fill="url(#kg2)"/><path d="M15.5 4 L16.3 8" stroke="#3A7BF0" stroke-width="1"/><circle cx="14.3" cy="1.8" r="0.8" fill="#4A8AF5"/></svg>
<div style="position:absolute;left:396px;top:389.59px;font-size:12.3px;line-height:1;color:#000;font-weight:400;white-space:nowrap;">Změna inventárního čí...</div>
<div style="position:absolute;left:548px;top:395px;width:10px;height:1px;background:#111"></div>
<div style="position:absolute;left:593px;top:390px;width:10px;height:10px;box-sizing:border-box;border:1px solid #111"></div>
<svg style="position:absolute;left:638px;top:389px;" width="12" height="12" viewBox="0 0 12 12"><path d="M1 1 L11 11 M11 1 L1 11" stroke="#111" stroke-width="1.1"/></svg>
<div style="position:absolute;left:370px;top:414px;width:126px;height:15px;background:#0BA3E6"></div>
<div style="position:absolute;left:377.3px;top:415.64px;font-size:12px;line-height:1;color:#FFFFFF;font-weight:400;white-space:nowrap;">Nové inventární číslo</div>
<div style="position:absolute;left:370px;top:429px;width:294px;height:23px;background:#FFFDE3;box-sizing:border-box;border:2px solid #0A4FA3"></div>
<div style="position:absolute;left:373px;top:432px;width:40.6px;height:17px;background:#0A63C9"></div>
<div style="position:absolute;left:413.6px;top:432px;width:1px;height:17px;background:#E07020"></div>
<div style="position:absolute;left:373.5px;top:435.00px;font-size:13px;line-height:1;color:#FFFFFF;font-weight:400;white-space:nowrap;letter-spacing:0.4px">HM/25</div>
<div style="position:absolute;left:647px;top:439.7px;width:2px;height:2px;background:#0C4FA6;border-radius:0.5px"></div>
<div style="position:absolute;left:651.5px;top:439.7px;width:2px;height:2px;background:#0C4FA6;border-radius:0.5px"></div>
<div style="position:absolute;left:656.2px;top:439.7px;width:2px;height:2px;background:#0C4FA6;border-radius:0.5px"></div>
<div style="position:absolute;left:471px;top:459px;width:94px;height:23px;background:#00ADEF"></div>
<div style="position:absolute;left:518px;transform:translateX(-50%);top:464.92px;font-size:12.5px;line-height:1;color:#FFFFFF;font-weight:400;white-space:nowrap;">OK</div>
<div style="position:absolute;left:571px;top:459px;width:93px;height:23px;background:#00ADEF"></div>
<div style="position:absolute;left:617.5px;transform:translateX(-50%);top:464.92px;font-size:12.5px;line-height:1;color:#FFFFFF;font-weight:400;white-space:nowrap;"><u>S</u>torno</div>
</body></html>
